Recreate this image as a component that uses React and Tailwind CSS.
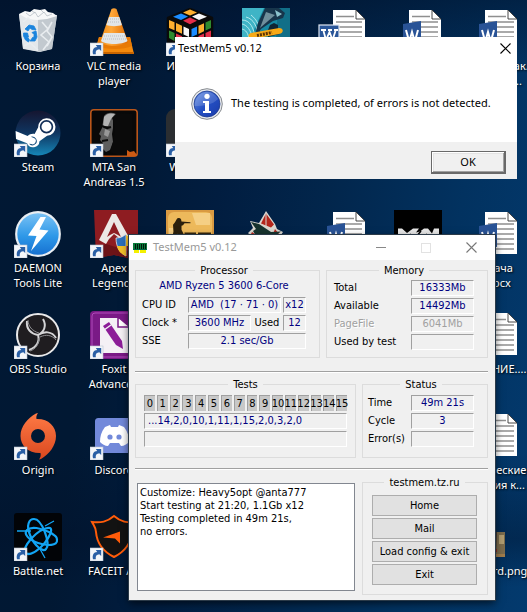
import React from 'react';

/* ---------- desktop icons, each on a 48 x 48 canvas ---------- */

function Shortcut() {
  return (
    <g>
      <rect x="0" y="35" width="13" height="13" fill="#f4f6f9" stroke="#b9c2cf" strokeWidth=".6" />
      <path d="M3 46.200c-.9-4.200.6-7 4.200-7.200L5.800 37h5.400v6L9.300 41.300C6.600 41.600 5.300 43 5.800 46.200z" fill="#2a5fa5" />
    </g>
  );
}

function Glyph({ link, children }) {
  return (
    <svg viewBox="0 0 48 48" className="block size-12" aria-hidden="true">
      {children}
      {link && <Shortcut />}
    </svg>
  );
}

const RecycleBin = () => (
  <Glyph>
    <path d="M5 6l38 1-5 34-12 3-17-3z" fill="#cfd5da" />
    <path d="M5 6l8 2 11 2v33.500l-15-3z" fill="#e4e8eb" />
    <path d="M43 7L24 10v34l14-3z" fill="#c2c9cf" />
    <path d="M5 6l6-3 5 1 4-3 6 1 5-1 3 3 5 1 4 3-10 3-10 1-9-1z" fill="#f7f8f9" />
    <path d="M12 5l4 3 5-4 3 5 6-5 3 4 5-2M18 3l3 2M27 2l3 3" fill="none" stroke="#b6bec5" strokeWidth=".8" />
    <path d="M28 14l6 7-7 6 8 7-6 8M38 14l-5 9 5 6-5 9M9 14l5-4 5 4M10 38l6-3 8 7" fill="none" stroke="#e9edf0" strokeWidth="1.600" />
    <path d="M11 21l4-4 5 1 2 4-4-.5-2-1.500-2 3zM22 23l1 6-2 4h-5l3-4 1 .5 0-3-2-2zM9.500 25l4 0 1 4-1 0 2 3-1 2-3-2-2-4z" fill="#1b84dd" stroke="#1b84dd" strokeWidth=".8" />
  </Glyph>
);

const Vlc = () => (
  <Glyph link>
    <defs>
      <linearGradient id="cone" x1="0" x2="1">
        <stop offset="0" stopColor="#f08a10" />
        <stop offset=".4" stopColor="#ffa83a" />
        <stop offset="1" stopColor="#e06a00" />
      </linearGradient>
    </defs>
    <path d="M9 29h31l4 17H4z" fill="#f58a0c" />
    <path d="M4 44l40 0v2H4z" fill="#c96500" />
    <path d="M9 29h31l2 9c-8 4-26 4-35 0z" fill="#e87a05" />
    <path d="M21.500 1q2.500-1.500 5 0L38 34c-5 5-23 5-28 0z" fill="url(#cone)" />
    <path d="M19 9h10.300l2.600 8c-3 1.500-12.500 1.500-15.500 0z" fill="#e2e5e7" />
    <path d="M14 25h20.500l3 8c-5 4-22 4-26.500 0z" fill="#e2e5e7" />
    <path d="M20 11h9M18 14h12M14 28h21M13 31h23" stroke="#b9bfc4" strokeWidth="1" strokeDasharray="1 1" />
  </Glyph>
);

const Rubik = () => (
  <Glyph link>
    <path d="M24 1l22 9v25L24 47 2 35V10z" fill="#0a0a0a" stroke="#0a0a0a" strokeWidth="2.500" strokeLinejoin="round" />
    <path d="M24 1.500l7 3-7 3-7-3z" fill="#ffb02e" />
    <path d="M15 5.500l7 3-7 3.500-8-3.200z" fill="#1a8cff" />
    <path d="M33 5.500l8 3.300-8 3.200-7-3.500z" fill="#f7f7f7" />
    <path d="M24 9.500l7 3.200-7 3.500-7-3.500z" fill="#e32d4a" />
    <path d="M3 12l5.500 2.300v8L3 20z" fill="#ffb02e" />
    <path d="M3 22.500L8.500 25v8L3 30z" fill="#2f8a2f" />
    <path d="M10 15l6 2.800v8L10 23z" fill="#ffb02e" />
    <path d="M10 25.500l6 2.800v8L10 33z" fill="#e32d4a" />
    <path d="M17.500 18.500l5.500 2.500v8l-5.500-2.500z" fill="#f7f7f7" />
    <path d="M17.500 29l5.500 2.500v8L17.500 37z" fill="#1a8cff" />
    <path d="M25.500 21l5.500-2.500v8L25.500 29z" fill="#1a8cff" />
    <path d="M32.500 17.800l5.500-2.600v8L32.500 26z" fill="#ffb02e" />
    <path d="M39.500 14.500L45 12v8l-5.500 2.500z" fill="#2f8a2f" />
    <path d="M25.500 31.500l5.500-2.500v8l-5.500 2.500z" fill="#f7f7f7" />
    <path d="M32.500 28l5.500-2.500v8L32.500 36zM39.500 25l5.500-2.500v8L39.500 33z" fill="#e32d4a" />
  </Glyph>
);

const Snowboard = () => (
  <Glyph>
    <rect width="48" height="48" fill="#1689a2" />
    <path d="M0 0h22L8 30H0z" fill="#3fb4c6" />
    <path d="M0 12c8 0 12 8 13 18M0 16c5 1 9 6 10 14M0 21c4 1 6 4 7 10M4 9c8 2 11 10 12 18M9 7c5 4 8 9 9 16" fill="none" stroke="#bfeef0" strokeWidth=".9" />
    <path d="M36 0h12v30H34z" fill="#116f88" />
    <path d="M23 0l14 0 6 5-2 5-10 3-12 8-3 8-2-6 2-8z" fill="#17354b" />
    <path d="M24 4l9 3-15 13z" fill="#6f8f9c" />
    <path d="M33 2l7 4-5 3z" fill="#8cc3cd" />
    <path d="M28 17l4-2 4 2 0 5 2 4-12 3 0-7z" fill="#102633" />
    <path d="M9 25l28-5c5 0 5 5 0 6l-26 5c-5 0-6-5-2-6z" fill="#f7a916" />
    <path d="M15 27.500l15-3" stroke="#5e3404" strokeWidth="3" strokeDasharray="2 1" />
  </Glyph>
);

const Steam = () => (
  <Glyph link>
    <defs>
      <linearGradient id="steam" x1="0" y1="0" x2="0" y2="1">
        <stop offset="0" stopColor="#151530" />
        <stop offset=".5" stopColor="#0f3560" />
        <stop offset="1" stopColor="#1687b8" />
      </linearGradient>
    </defs>
    <circle cx="24" cy="24" r="22.500" fill="url(#steam)" />
    <path d="M1.600 22l12 5c2-2 5-2.500 7-2l3.500-6.500a8.700 8.700 0 1 1 9 8.200l-7.600 5.500a6.500 6.500 0 0 1-12.500 2L2 30z" fill="#fff" />
    <circle cx="32.500" cy="17.700" r="5.900" fill="#fff" stroke="#132f58" strokeWidth="1.700" />
    <path d="M15 34.800a4.400 4.400 0 1 0 1.800-7l3 1.300a3.200 3.200 0 0 1-2.500 6z" fill="#154d7c" />
  </Glyph>
);

const Mta = () => (
  <Glyph link>
    <rect x=".8" y=".8" width="46.400" height="46.400" rx="3" fill="#080808" stroke="#b9561a" strokeWidth="1.600" />
    <path d="M14 7c3-4 8-4 12-2l-3 7 0 7-1 6 1 8-3 8-4 2-3-3 0-6-3-3 1-4-2-2 3-6z" fill="#5e5e5e" />
    <path d="M14 8c3-4 7-4 11-3l-4 5-3 7-5 1z" fill="#b4b4b4" />
    <path d="M12 17l5 2 4-1M12 32l6-1" stroke="#0c0c0c" strokeWidth="2.200" />
    <path d="M15 20l5 2-2 6-4-2z" fill="#979797" />
    <path d="M22 9c4 8 3 20-2 34l8 3h14V5L27 4z" fill="#0a0a0a" />
    <path d="M37 41l3 2 4-1 3 4v1H37z" fill="#cc5a14" />
  </Glyph>
);

const Wallpaper = () => (
  <Glyph link>
    <rect width="48" height="48" rx="9" fill="#2b2e31" />
    <path d="M12 14l12 20 12-20" fill="none" stroke="#0b78c8" strokeWidth="4" />
  </Glyph>
);

const Daemon = () => (
  <Glyph link>
    <defs>
      <linearGradient id="daemon" x1="0" y1="0" x2="0" y2="1">
        <stop offset="0" stopColor="#7cc3f5" />
        <stop offset=".55" stopColor="#2e98e8" />
        <stop offset="1" stopColor="#156fd0" />
      </linearGradient>
    </defs>
    <circle cx="24" cy="24" r="21.800" fill="url(#daemon)" stroke="#e8edf2" strokeWidth="2.200" />
    <path d="M26.500 7L14 25.500l8.500.5L17 41l17.500-20.500-9-1L32 7z" fill="#fff" />
  </Glyph>
);

const Apex = () => (
  <Glyph link>
    <path d="M4 0h44v48H38l-14-3-18 3z" fill="#8e1c21" />
    <path d="M4 38l12-4 32 10v4H38l-14-3-18 3z" fill="#6c1317" />
    <path d="M22 4h4l15 27-7 5-5-8-5-4-5 5-3 5-7-4z" fill="#ece8e5" />
    <path d="M24 12l7 15-3-2-4-2-4 2-3 2z" fill="#8e1c21" />
    <path d="M26 28c5 0 8-2 10-4v22c-6-3-10-9-10-18z" fill="#2c6fbb" stroke="#e8e8e8" strokeWidth=".8" />
    <path d="M27 36h9v10c-5-2-8-5-9-10z" fill="#f3c12b" />
    <path d="M36 25c3 2 6 3 10 3v8H36z" fill="#f3c12b" />
  </Glyph>
);

const CounterStrike = () => (
  <Glyph link>
    <rect width="48" height="48" fill="#d99a42" />
    <rect x="2" y="2" width="44" height="44" rx="6" fill="#edb95b" />
    <path d="M26 3h18v12H30zM3 18h4v18H3z" fill="#f5cf85" />
    <path d="M10.500 9.500a2.600 2.600 0 0 1 4.600 0l.4 2 9 .8v1h-6l-1.500 2-1.500.5v4l2 4 .5 8h-3l-1.500-7-2-1-2.500 8H5l2.500-10-.5-7 2-2.500z" fill="#2b200d" />
    <path d="M30 23.500H19.500v11H30V29h-4M33 23.500h11v11H33z" fill="none" stroke="#33260f" strokeWidth="2" />
  </Glyph>
);

const Stars = () => (
  <Glyph>
    <path d="M24 1l9 13 2 5 6 3-2 3 7 12H3l6-11-3-3 5-5-3-7 9 2z" fill="#d9d6cf" />
    <path d="M24 3.500l8 11-3 3-10-4zM33 19l4 5-6 0zM10 22l6 4h-8z" fill="#b3261c" />
    <path d="M24 4l0 12" stroke="#d9d6cf" strokeWidth="1" />
    <path d="M9 12l8 2 12 8 10-.5-6 4.500H14l-3-5 3-2z" fill="#17332e" />
  </Glyph>
);

const Warfare = () => (
  <Glyph>
    <rect width="48" height="48" fill="#000" />
    <path d="M4 34V18.500h4l5 4.500 6-4.500h6l-3 4 4-1 4-3h4l4 5 2-5h5V34l-7-8-5 6-5-6-5 6-6-5v7l-4-4z" fill="#e6e6e6" />
    <path d="M8 25l4 4 5-5M22 27l5-6M32 24l4 5" stroke="#000" strokeWidth="1.500" fill="none" />
  </Glyph>
);

const Page = () => (
  <g>
    <path d="M15 2h23l9 9v33H15z" fill="#fff" />
    <path d="M38 2v9h9z" fill="#fff" stroke="#333" strokeWidth=".9" />
    <path d="M18 8.500h18M18 14h26M18 19h26M18 24h26M18 29h26M18 34h26M18 39h26" stroke="#8f8f8f" strokeWidth="1.700" />
  </g>
);

const WordDoc = () => (
  <Glyph>
    <Page />
    <path d="M9 16l18-3v24L9 34z" fill="#295396" />
    <path d="M12 22l2.500 9h1.500l2-7 2 7h1.500L24 22" fill="none" stroke="#fff" strokeWidth="2" />
  </Glyph>
);

const OldWordDoc = () => (
  <Glyph>
    <Page />
    <rect x="1" y="17" width="20" height="19" fill="#2a5699" stroke="#dfe6f0" strokeWidth="1.200" />
    <path d="M3 22h5M10 22h4M16 22h4M5.500 23l2.500 9 3.500-8 3 8 3-9" fill="none" stroke="#fff" strokeWidth="1.800" />
  </Glyph>
);

const TextDoc = () => (
  <Glyph>
    <Page />
  </Glyph>
);

const Photo = () => (
  <Glyph>
    <rect y="19" width="35" height="25" fill="#3d3630" />
    <path d="M27 19h8v25h-9z" fill="#7b6b4c" />
    <path d="M29 22h5v9h-5z" fill="#b09c70" />
    <path d="M15 36h12v3H15z" fill="#8d2b22" />
    <path d="M17 30l3-4 1 4 4-7" fill="none" stroke="#ddd6cc" strokeWidth="1.200" />
    <path d="M15 41h20v3H15z" fill="#a07c4b" />
  </Glyph>
);

const Obs = () => (
  <Glyph link>
    <circle cx="24" cy="24" r="21" fill="#1f1d20" stroke="#e9e9ea" strokeWidth="2" />
    <path d="M13 10c-1 8 4 13 11 14 2 6-1 12-9 15M24 24c6-4 14-4 18 3M24 24c6-3 9-9 5-16" fill="none" stroke="#d4d4d6" strokeWidth="2" />
    <path d="M14 9c0 6 4 11 11 13M42 29c-4-5-10-6-16-3M16 40c6-2 9-7 9-13" fill="none" stroke="#8d8d90" strokeWidth="1" />
  </Glyph>
);

const Foxit = () => (
  <Glyph link>
    <rect width="48" height="48" rx="4" fill="#7a1a86" />
    <rect x="2" y="2" width="44" height="44" rx="3" fill="none" stroke="#b04abb" />
    <path d="M10 7h18l12 10v25H10z" fill="#f4f0f5" />
    <path d="M28 6v10h12z" fill="#fff" stroke="#7a1a86" strokeWidth="1.500" />
    <path d="M13 15l6-4 13 19 1 8-7-4z" fill="#8c1d98" />
    <path d="M14 19l7-5" stroke="#f4f0f5" strokeWidth="1.500" />
  </Glyph>
);

const Origin = () => (
  <Glyph link>
    <defs>
      <linearGradient id="origin" x1="0" y1="0" x2="0" y2="1">
        <stop offset="0" stopColor="#ff7a45" />
        <stop offset="1" stopColor="#d9481f" />
      </linearGradient>
    </defs>
    <path d="M24 1c-1.500 2-2 4-1.500 6C34 6.500 42 14 42 24c0 10-7 18-15 23l-2 .5c1.500-2 2-4 1.500-6.500C15 41.500 6.500 34 6.500 24 6.500 14 14 6 22 1.500zM24 17a7 7 0 1 0 0 14 7 7 0 0 0 0-14z" fill="url(#origin)" fillRule="evenodd" />
  </Glyph>
);

const Discord = () => (
  <Glyph link>
    <path d="M9 6h34c3 0 4 1 4 4v37l-9-6H9c-3 0-4-1-4-4V10c0-3 1-4 4-4z" fill="#7289da" />
    <path d="M15 15l5-2 1 2h7l1-2 5 2c4 5 5 10 5 15-2 2-5 4-8 4l-2-3h-9l-2 3c-3 0-6-2-8-4 0-5 1-10 5-15z" fill="#fff" />
    <circle cx="20" cy="25" r="2.600" fill="#7289da" />
    <circle cx="29" cy="25" r="2.600" fill="#7289da" />
  </Glyph>
);

const BattleNet = () => (
  <Glyph link>
    <rect width="48" height="48" rx="3" fill="#020407" />
    <g fill="none" stroke="#12a5f4" strokeWidth="2.200">
      <path d="M20 6c8 0 17 25 12 30-3 4-12-4-16-14S15 6 20 6z" />
      <path d="M43 27c1 6-10 6-19 3S9 21 13 17s14-2 22 2 8 6 8 8z" />
      <path d="M12 40c-4-4 4-14 10-19s14-8 15-5-4 13-11 19-12 7-14 5z" />
    </g>
    <path d="M3 18l14 0M31 13l9-5M26 36l5 9" stroke="#12a5f4" strokeWidth="1.300" />
  </Glyph>
);

const Faceit = () => (
  <Glyph link>
    <path d="M2 9c9 1 15 0 22-6 7 6 13 7 22 6-2 4-4 6-4 10-1 12-8 20-18 25C14 39 7 31 6 19c0-4-2-6-4-10z" fill="#121212" stroke="#ff5c0a" strokeWidth="2" />
    <path d="M13 24.500l17-6v12l-5-5z" fill="#ff5c0a" />
  </Glyph>
);

/* Desktop cells, row by row; null leaves a cell of the grid free */
const desktop = [
  [RecycleBin, 'Корзина'], [Vlc, 'VLC media player'], [Rubik, 'Игровые'], [Snowboard, ''], [OldWordDoc, ''], [WordDoc, ''], [WordDoc, 'Разборы как. копия 2.....'],
  [Steam, 'Steam'], [Mta, 'MTA San Andreas 1.5'], [Wallpaper, 'Wallpap'], null, null, null, null,
  [Daemon, 'DAEMON Tools Lite'], [Apex, 'Apex Legends'], [CounterStrike, ''], [Stars, ''], [WordDoc, ''], [Warfare, ''], [WordDoc, 'Задача 1.docx'],
  [Obs, 'OBS Studio'], [Foxit, 'Foxit Advanced'], null, null, null, null, [TextDoc, 'РЕШЕНИЕ....'],
  [Origin, 'Origin'], [Discord, 'Discord'], null, null, null, null, [TextDoc, 'Физические задания к...'],
  [BattleNet, 'Battle.net'], [Faceit, 'FACEIT AC'], null, null, null, null, [Photo, 'my_card.png'],
];

function Desktop() {
  return (
    <ul className="grid auto-rows-[80px] grid-cols-[repeat(7,76px)] gap-y-[21px] pt-2">
      {desktop.map((item, i) => {
        if (!item) return <li key={i} />;
        const [Icon, label] = item;
        return (
          <li key={i} className="flex flex-col items-center gap-0.5">
            <Icon />
            <span className="w-[72px] text-center text-[11px] leading-[15px] text-white [text-shadow:1px_1px_2px_#000]">{label}</span>
          </li>
        );
      })}
    </ul>
  );
}

/* ---------- message box ---------- */

function CloseIcon() {
  return (
    <svg viewBox="0 0 11 11" className="size-[11px]" aria-hidden="true">
      <path d="M.5.5l10 10M10.500.5l-10 10" stroke="currentColor" strokeWidth="1.100" />
    </svg>
  );
}

function InfoIcon() {
  return (
    <svg viewBox="0 0 32 32" className="size-8 shrink-0" aria-hidden="true">
      <defs>
        <linearGradient id="info" x1="0" y1="0" x2="1" y2="1">
          <stop offset="0" stopColor="#6f95e4" />
          <stop offset=".5" stopColor="#2450c4" />
          <stop offset="1" stopColor="#1a3aa8" />
        </linearGradient>
      </defs>
      <circle cx="16" cy="16" r="15.300" fill="#e9ebee" stroke="#85898f" strokeWidth="1" />
      <circle cx="16" cy="16" r="13" fill="url(#info)" stroke="#1c388d" strokeWidth=".8" />
      <path d="M3.500 18C4 8 11 4 16 4s9 3 11 7c-6 6-14 7-23.500 7z" fill="#fff" opacity=".16" />
      <circle cx="16" cy="8.300" r="2.600" fill="#fff" />
      <path d="M12 13h6v10h2v2h-8v-2h2v-8h-2z" fill="#fff" />
    </svg>
  );
}

function MessageBox() {
  return (
    <section role="dialog" aria-labelledby="msg-title" className="absolute top-[37px] left-[175px] w-[342px] bg-white text-[11px] text-black">
      <header className="flex h-[22px] items-center justify-between pr-[6px] pl-[3px]">
        <h2 id="msg-title" className="text-[11px]">TestMem5 v0.12</h2>
        <button type="button" aria-label="Close"><CloseIcon /></button>
      </header>
      <div className="flex h-[83px] items-center gap-2 pt-[6px] pl-4">
        <InfoIcon />
        <p>The testing is completed, of errors is not detected.</p>
      </div>
      <footer className="flex h-[37px] items-center justify-end bg-[#f0f0f0] pt-1 pr-[11px]">
        <button type="button" className="h-[23px] w-[75px] border border-r-2 border-b-2 border-[#696969] bg-[#f0f0f0] shadow-[inset_1px_1px_0_#fff,inset_-1px_-1px_0_#a0a0a0,inset_2px_2px_0_#e3e3e3]">OK</button>
      </footer>
    </section>
  );
}

/* ---------- TestMem5 window ---------- */

function Group({ title, className, children }) {
  return (
    <fieldset className={`min-w-0 border border-[#dcdcdc] ${className}`}>
      <legend className="mx-auto px-[5px] leading-[15px]">{title}</legend>
      {children}
    </fieldset>
  );
}

const box = 'block h-4 overflow-hidden border border-t-[#a0a0a0] border-r-white border-b-white border-l-[#a0a0a0] text-center leading-[14px] whitespace-pre';

function Value({ className = '', children }) {
  return <output className={`${box} text-[#000080] ${className}`}>{children}</output>;
}

function Rows({ rows, className }) {
  return (
    <dl className={`grid gap-y-0.5 ${className}`}>
      {rows.map(([name, value, off]) => (
        <React.Fragment key={name}>
          <dt className={off ? 'leading-4 whitespace-nowrap text-[#a0a0a0] [text-shadow:1px_1px_0_#fff]' : 'leading-4 whitespace-nowrap'}>{name}</dt>
          <dd className={off ? `${box} text-[#a0a0a0]` : `${box} text-[#000080]`}>{value}</dd>
        </React.Fragment>
      ))}
    </dl>
  );
}

const Rule = () => <hr className="h-0.5 border-t border-b border-t-[#a0a0a0] border-b-white" />;

const actions = ['Home', 'Mail', 'Load config & exit', 'Exit'];

const log = `Customize: Heavy5opt @anta777
Start testing at 21:20, 1.1Gb x12
Testing completed in 49m 21s,
no errors.`;

function RamIcon() {
  return (
    <svg viewBox="0 0 14 10" className="h-[10px] w-[14px]" aria-hidden="true" shapeRendering="crispEdges">
      <path d="M0 0h14v7H0z" fill="#0a7a3a" />
      <path d="M2 1h1v5H2zM4 1h1v5H4zM6 1h1v5H6zM8 1h1v5H8zM10 1h1v5h-1zM12 1h1v5h-1z" fill="#00170b" />
      <path d="M1 7h5v3H1zM7 7h6v3H7z" fill="#f4f000" />
      <path d="M0 6h14v1H0z" fill="#064" />
    </svg>
  );
}

function MainWindow() {
  return (
    <main className="absolute top-[235px] left-[129px] w-[366px] bg-[#f0f0f0] pb-[5px] font-['DejaVu_Sans_Condensed','DejaVu_Sans',sans-serif] text-[11px] text-black shadow-[0_0_0_1px_#2b3a48,0_3px_8px_#000a]">
      <header className="flex h-[25px] items-center bg-white pl-1 text-[#999]">
        <RamIcon />
        <h1 className="grow pl-[6px] font-['Noto_Sans',sans-serif] text-[11px]">TestMem5 v0.12</h1>
        <div className="flex items-center gap-[35px] pr-[18px]">
          <button type="button" aria-label="Minimize" className="flex h-[11px] w-[10px] items-center"><span className="h-px w-full bg-[#888]" /></button>
          <button type="button" aria-label="Maximize" disabled className="size-[10px] border border-[#e2e2e2]" />
          <button type="button" aria-label="Close" className="text-[#777]"><CloseIcon /></button>
        </div>
      </header>

      <div className="flex flex-col pt-[3px] pr-[7px] pl-[6px]">
        <div className="grid grid-cols-[185fr_162fr] gap-[6px]">
          <Group title="Processor" className="h-[95px] pr-[13px] pl-[6px]">
            <p className="text-center leading-[15px] text-[#000080]">AMD Ryzen 5 3600 6-Core</p>
            <div className="grid grid-cols-[46px_1fr] gap-y-0.5 pt-1 leading-4">
              <span>CPU ID</span>
              <div className="flex gap-0.5">
                <Value className="grow">{'AMD  (17 · 71 · 0)'}</Value>
                <Value className="w-[23px]">x12</Value>
              </div>
              <span>Clock *</span>
              <div className="flex">
                <Value className="grow">3600 MHz</Value>
                <span className="w-8 text-center">Used</span>
                <Value className="w-[23px]">12</Value>
              </div>
              <span>SSE</span>
              <Value>2.1 sec/Gb</Value>
            </div>
          </Group>
          <Group title="Memory" className="h-[95px] pr-[13px] pl-[7px]">
            <Rows
              className="grid-cols-[1fr_63px] pt-0.5"
              rows={[['Total', '16333Mb'], ['Available', '14492Mb'], ['PageFile', '6041Mb', true], ['Used by test', '']]}
            />
          </Group>
        </div>

        <div className="pt-[13px] pb-1"><Rule /></div>

        <div className="grid grid-cols-[221fr_126fr] gap-[6px]">
          <Group title="Tests" className="h-[81px] px-2">
            <ol className="grid grid-cols-16 gap-x-0.5 pt-[3px]">
              {Array.from({ length: 16 }, (_, n) => (
                <li key={n} className="flex h-4 justify-center border-t border-l border-[#a0a0a0] bg-[#c8c8c8] leading-[15px]">{n}</li>
              ))}
            </ol>
            <div className="flex flex-col gap-0.5 pt-0.5">
              <output className={`${box} pl-[3px] text-left! text-[#000080]`}>...14,2,0,10,1,11,1,15,2,0,3,2,0</output>
              <Value />
            </div>
          </Group>
          <Group title="Status" className="h-[81px] pr-[13px] pl-[5px]">
            <Rows className="grid-cols-[1fr_63px] pt-[3px]" rows={[['Time', '49m 21s'], ['Cycle', '3'], ['Error(s)', '']]} />
          </Group>
        </div>

        <div className="pt-[10px] pb-[5px]"><Rule /></div>

        <div className="grid grid-cols-[221fr_126fr] gap-[6px]">
          <textarea
            readOnly
            aria-label="Log"
            value={log}
            className="mt-2 mr-px ml-0.5 h-[108px] resize-none overflow-hidden border border-[#828790] bg-white px-[2px] py-[2px] leading-[13px] whitespace-pre"
          />
          <Group title="testmem.tz.ru" className="pr-[10px] pb-[9px] pl-[9px]">
            <div className="flex flex-col gap-0.5 pt-[5px]">
              {actions.map((name) => (
                <button key={name} type="button" className="h-[21px] border border-[#adadad] bg-[#e1e1e1] leading-[19px] whitespace-nowrap">{name}</button>
              ))}
            </div>
          </Group>
        </div>
      </div>
    </main>
  );
}

export default function App() {
  return (
    <div className="relative min-h-screen overflow-hidden bg-[linear-gradient(180deg,#00102880_0%,transparent_12%,transparent_74%,#00112a66_88%,transparent_96%),linear-gradient(98deg,#011834_0%,#011833_22%,#011d40_40%,#02264c_58%,#023260_80%,#033a6e_100%)] font-['Noto_Sans','Open_Sans',sans-serif]">
      <Desktop />
      <MessageBox />
      <MainWindow />
    </div>
  );
}
